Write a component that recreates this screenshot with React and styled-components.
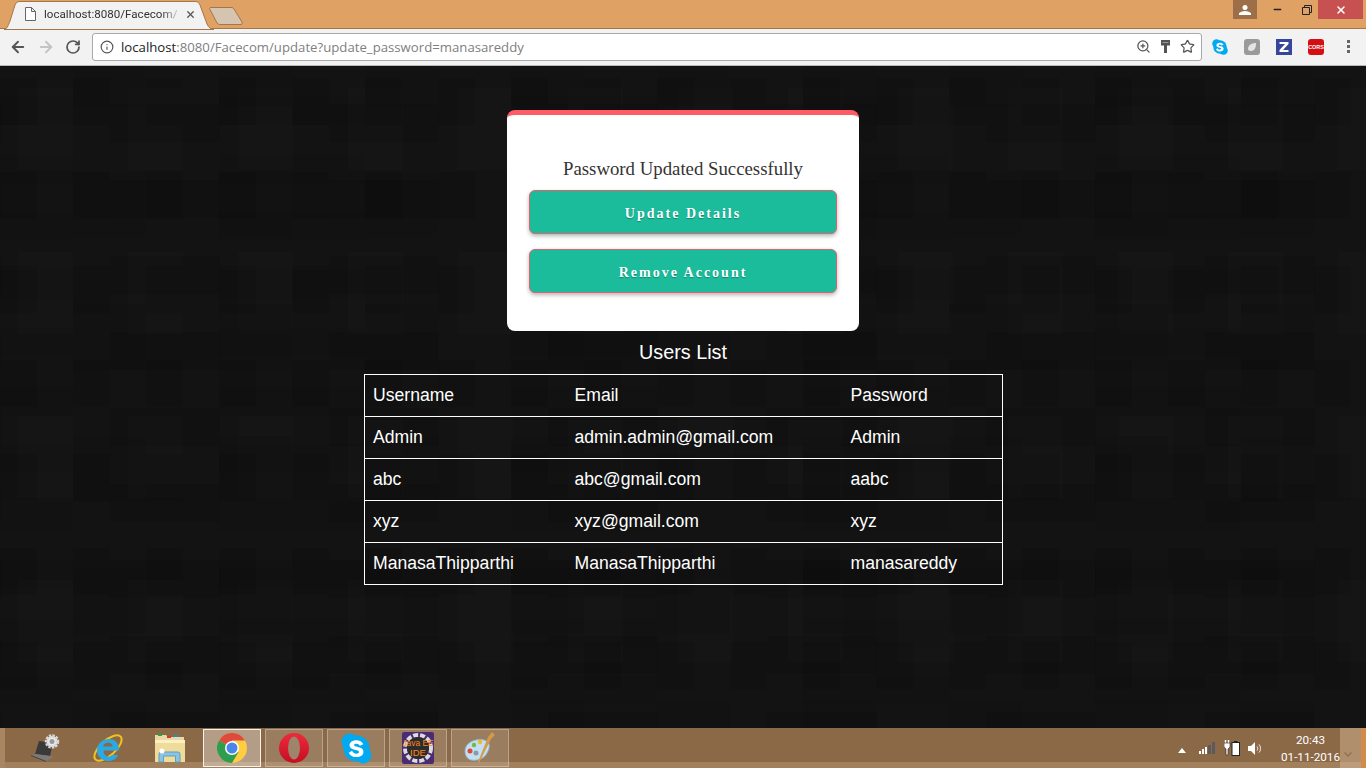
import React from "react";
import styled, { createGlobalStyle } from "styled-components";
import { ArrowLeft, ArrowRight, RotateCw, Info, ZoomIn, Star, X, Minus } from "lucide-react";

const GlobalStyle = createGlobalStyle`
  html, body {
    margin: 0;
    padding: 0;
    overflow: hidden;
  }
  * {
    box-sizing: border-box;
  }
`;

const Screen = styled.div`
  width: 1366px;
  height: 768px;
  display: flex;
  flex-direction: column;
  overflow: hidden;
  font-family: "Liberation Sans", Arial, sans-serif;
`;

/* browser chrome */
const TabStrip = styled.div`
  height: 29px;
  flex: none;
  background: #e0a164;
  border-bottom: 1px solid #a5764a;
  display: flex;
  align-items: flex-start;
  justify-content: space-between;
  padding-left: 4px;
`;

const TabGroup = styled.div`
  display: flex;
  align-items: flex-start;
`;

const Tab = styled.div`
  position: relative;
  width: 210px;
  height: 29px;
  margin-top: 1px;
  display: flex;
  align-items: center;
  padding: 0 0 3px 21px;
  font-family: Roboto, "Noto Sans", sans-serif;
  font-size: 11.6px;
  color: #333;
  white-space: nowrap;
`;

const TabShape = styled.svg`
  position: absolute;
  left: 0;
  top: 0;
`;

const TabText = styled.span`
  position: relative;
  width: 133px;
  margin-left: 8px;
  -webkit-mask-image: linear-gradient(90deg, #000 88%, rgba(0, 0, 0, 0.25));
  mask-image: linear-gradient(90deg, #000 88%, rgba(0, 0, 0, 0.25));
`;

const TabClose = styled.span`
  position: relative;
  margin-left: 8px;
  display: flex;
  color: #5a5a5a;
`;

const NewTab = styled.svg`
  margin: 7px 0 0 -5px;
`;

const WindowButtons = styled.div`
  display: flex;
  align-items: flex-start;
  padding-right: 3px;
`;

const ProfileButton = styled.div`
  width: 24px;
  height: 19px;
  background: #9c6f48;
  display: flex;
  align-items: center;
  justify-content: center;
  margin-right: 2px;
`;

const WindowButton = styled.div`
  width: ${(p) => p.$w}px;
  height: 19px;
  display: flex;
  align-items: center;
  justify-content: center;
  color: ${(p) => (p.$close ? "#fff" : "#222")};
  background: ${(p) => (p.$close ? "#c75050" : "transparent")};
`;

const Toolbar = styled.div`
  height: 37px;
  flex: none;
  background: #f2f2f2;
  border-bottom: 1px solid #b8b8b8;
  display: flex;
  align-items: center;
  padding: 0 0 1px 9px;
`;

const NavButton = styled.span`
  width: 28px;
  display: flex;
  color: ${(p) => (p.$off ? "#c4c4c4" : "#555")};
`;

const Omnibox = styled.div`
  width: 1110px;
  height: 28px;
  margin-left: -1px;
  background: #fff;
  border: 1px solid #a9a9a9;
  border-radius: 3px;
  display: flex;
  align-items: center;
  padding: 0 6px 0 7px;
  color: #555;
`;

const Url = styled.div`
  flex: 1;
  margin-left: 7px;
  font-family: "Open Sans", "Noto Sans", sans-serif;
  font-size: 13.2px;
  color: #808080;
  white-space: nowrap;
`;

const UrlHost = styled.span`
  color: #222;
`;

const OmniIcons = styled.div`
  display: flex;
  align-items: center;
  gap: 10px;
`;

const Extensions = styled.div`
  display: flex;
  align-items: center;
  gap: 16px;
  margin-left: 10px;
`;

const MenuDots = styled.svg`
  margin-left: 23px;
`;

/* page */
const Page = styled.main`
  flex: 1;
  min-height: 0;
  display: flex;
  flex-direction: column;
  align-items: center;
  padding-top: 44px;
  background-color: #131313;
  background-image:
    conic-gradient(rgba(0, 0, 0, 0.1) 25%, transparent 0),
    conic-gradient(from 90deg, rgba(0, 0, 0, 0.08) 25%, transparent 0),
    conic-gradient(from 180deg, rgba(0, 0, 0, 0.1) 25%, transparent 0),
    conic-gradient(from 270deg, rgba(255, 255, 255, 0.006) 25%, transparent 0),
    conic-gradient(rgba(0, 0, 0, 0.07) 25%, transparent 0);
  background-size: 73px 94px, 146px 132px, 219px 76px, 110px 164px, 292px 58px;
  background-position: 37px 12px, 0 40px, 110px 0, 18px 22px, 73px 30px;
`;

const Card = styled.section`
  width: 352px;
  height: 221px;
  background: #fff;
  border-top: 5px solid #ff5b67;
  border-radius: 8px;
  padding: 42px 22px 0;
  display: flex;
  flex-direction: column;
  align-items: center;
`;

const Message = styled.p`
  margin: 0 0 10px;
  height: 23px;
  line-height: 23px;
  font-family: "Liberation Serif", "Times New Roman", serif;
  font-size: 18.8px;
  color: #333;
`;

const ActionButton = styled.button`
  width: 308px;
  height: 44px;
  flex: none;
  margin-bottom: 15px;
  padding: 4px 0 0;
  background: #1abc9c;
  border: 1px solid #e0636c;
  border-radius: 6px;
  box-shadow: 0 2px 4px rgba(0, 0, 0, 0.3);
  color: #fff;
  font-family: "Liberation Serif", "Times New Roman", serif;
  font-size: 14px;
  font-weight: 700;
  letter-spacing: 2px;
  text-shadow: 0 1px 1px rgba(0, 0, 0, 0.3);
`;

const ListTitle = styled.h2`
  margin: 9px 0 10px;
  height: 24px;
  line-height: 24px;
  font-size: 19.8px;
  font-weight: 400;
  color: #fff;
`;

const UsersTable = styled.table`
  width: 638px;
  margin-left: 1px;
  border-collapse: collapse;
  table-layout: fixed;
  color: #fff;
  font-size: 17.6px;
  border: 1px solid #fff;
`;

const Cell = styled.td`
  height: 42px;
  padding: 0 8px;
  border-top: 1px solid #fff;
  white-space: nowrap;
`;

/* taskbar */
const Taskbar = styled.footer`
  height: 40px;
  flex: none;
  display: flex;
  align-items: stretch;
  background: linear-gradient(#8b6947 0 34px, #a2805c 34px);
  border-left: 5px solid #a98561;
  border-right: 5px solid #d18b4d;
`;

const TaskItems = styled.div`
  display: flex;
  gap: 4px;
  padding: 1px 0 0 12px;
`;

const TaskItem = styled.div`
  width: 58px;
  height: 38px;
  display: flex;
  align-items: center;
  justify-content: center;
  background: ${(p) =>
    p.$active ? "rgba(255,255,255,0.35)" : p.$open ? "rgba(255,255,255,0.13)" : "transparent"};
  border: 1px solid
    ${(p) => (p.$active ? "#f4f0ec" : p.$open ? "rgba(255,255,255,0.3)" : "transparent")};
`;

const Tray = styled.div`
  margin-left: auto;
  display: flex;
  align-items: center;
`;

const TrayIcons = styled.div`
  display: flex;
  align-items: center;
  gap: 8px;
`;

const Clock = styled.div`
  width: 59px;
  margin-left: 18px;
  padding-top: 2px;
  text-align: center;
  font-family: Roboto, "Noto Sans", sans-serif;
  font-size: 11.7px;
  line-height: 17px;
  color: #fff;
  white-space: nowrap;
`;

const ShowDesktop = styled.div`
  width: 21px;
  height: 40px;
  background: linear-gradient(#b08f6d 0 34px, #bd9c7a 34px);
  display: flex;
  align-items: flex-end;
  padding: 0 0 11px 4px;
`;

const users = [
  ["Admin", "admin.admin@gmail.com", "Admin"],
  ["abc", "abc@gmail.com", "aabc"],
  ["xyz", "xyz@gmail.com", "xyz"],
  ["ManasaThipparthi", "ManasaThipparthi", "manasareddy"],
];

function PageIcon() {
  return (
    <svg width="11" height="14" viewBox="0 0 11 14" style={{ position: "relative", flex: "none" }}>
      <path d="M.5 .5h6l4 4v9H.5z M6.500 .5v4h4" fill="#fff" stroke="#666" />
    </svg>
  );
}

function KeyIcon() {
  return (
    <svg width="9" height="13" viewBox="0 0 9 13">
      <path d="M0 0h9v5.500H6V13H3V5.500H0z" fill="#555" />
      <rect x="1.500" y="2" width="6" height="1" fill="#999" />
    </svg>
  );
}

function SkypeIcon({ size }) {
  return (
    <svg width={size} height={size} viewBox="0 0 32 32">
      <circle cx="9" cy="9" r="8.500" fill="#00a9f0" />
      <circle cx="23" cy="23" r="8.500" fill="#00a9f0" />
      <circle cx="16" cy="16" r="13.500" fill="#00a9f0" />
      <path
        d="M23 11.500c-1.200-2.500-3.800-4-7.200-4-4.200 0-7 2.200-7 5.200 0 6 9.800 3.800 9.800 6.800 0 1.100-1.200 1.800-2.900 1.800-2.100 0-3.300-1-4.300-2.900l-3.400 1.900c1.400 3 4.200 4.600 7.800 4.600 4.400 0 7.400-2.200 7.400-5.600 0-6-9.800-4-9.800-6.800 0-.9 1-1.500 2.500-1.500 1.700 0 2.700.7 3.600 2.200z"
        fill="#fff"
      />
    </svg>
  );
}

function ExtIcons() {
  return (
    <Extensions>
      <SkypeIcon size={16} />
      <svg width="16" height="16" viewBox="0 0 16 16">
        <rect width="16" height="16" rx="3" fill="#9a9a9a" />
        <path d="M4 10c0-4 4-6 8-6 0 4-1 8-5 8-2 0-3-1-3-2z" fill="#e4e4e4" />
      </svg>
      <svg width="16" height="16" viewBox="0 0 16 16">
        <rect width="16" height="16" fill="#35469c" />
        <path d="M3.500 3h9v2l-5.500 6h5.500v2h-9v-2l5.500-6H3.500z" fill="#fff" />
      </svg>
      <svg width="16" height="16" viewBox="0 0 16 16">
        <rect width="16" height="16" rx="3" fill="#d40f14" />
        <text x="8" y="10" textAnchor="middle" fontSize="5.400" fontWeight="700" fill="#fff" fontFamily="Liberation Sans">
          CORS
        </text>
      </svg>
    </Extensions>
  );
}

function LaptopIcon() {
  return (
    <svg width="32" height="30" viewBox="0 0 32 30">
      <path d="M5 21L9 8l14 2-3 13z" fill="#3a3a3a" />
      <path d="M1 22l4-1 15 2 4 1-8 4z" fill="#7a7a7a" />
      <path d="M1 22l15 6v1L1 23z" fill="#454545" />
      <circle cx="22" cy="8.500" r="5.500" fill="#ececec" stroke="#d6d6d6" strokeDasharray="2.200 1" strokeWidth="3.500" />
      <circle cx="22" cy="8.500" r="2.500" fill="#9a9a9a" />
    </svg>
  );
}

function IeIcon() {
  return (
    <svg width="32" height="31" viewBox="0 0 32 31">
      <ellipse cx="16" cy="15" rx="17" ry="7.500" transform="rotate(-42 16 15)" fill="none" stroke="#f2c31c" strokeWidth="2" />
      <path
        d="M8.500 17.500h18.500c.4-7-4-11.500-10-11.500S5 10.500 5 17s5 11 11.500 11c4.500 0 8-2.200 9.800-6h-6.300c-.9 1.100-2 1.600-3.500 1.600-2.500 0-4.700-1.900-5-6.100z M11 13.500c.5-2.300 2.500-3.700 5-3.700s4.400 1.400 4.800 3.700z"
        fill="#2aa9e4"
        fillRule="evenodd"
      />
    </svg>
  );
}

function FolderIcon() {
  return (
    <svg width="32" height="30" viewBox="0 0 32 30">
      <path d="M1 2h11l2 2h16v8H1z" fill="#e9d9a4" />
      <rect x="4" y="1" width="4" height="2" fill="#1fa83c" />
      <rect x="13" y="3" width="4" height="2" fill="#d43a2a" />
      <rect x="20" y="2" width="4" height="2" fill="#1f8fd4" />
      <path d="M1 7h30v22H1z" fill="#f0dc9a" />
      <path d="M1 7h30v3H1z" fill="#fbf0c4" />
      <path d="M5 29V21q0-2 2-2h17q2 0 2 2v8h-4.500v-6h-12v6z" fill="#8cc4e0" stroke="#5a9fc6" />
      <circle cx="8" cy="18" r="2.500" fill="#fff" />
    </svg>
  );
}

function ChromeIcon() {
  return (
    <svg width="30" height="30" viewBox="0 0 30 30">
      <circle cx="15" cy="15" r="15" fill="#ffcd40" />
      <path d="M15 15L2 7.500A15 15 0 0 1 28 7.500H15z" fill="#de4a3c" />
      <path d="M15 15L2 7.500A15 15 0 0 0 15 30l6.500-11z" fill="#2e9d4e" />
      <circle cx="15" cy="15" r="7" fill="#fff" />
      <circle cx="15" cy="15" r="5.500" fill="#4a86e8" />
    </svg>
  );
}

function OperaIcon() {
  return (
    <svg width="30" height="30" viewBox="0 0 30 30">
      <defs>
        <linearGradient id="operaRed" x1="0" y1="0" x2="0" y2="1">
          <stop offset="0" stopColor="#ee2a3c" />
          <stop offset="1" stopColor="#c40e22" />
        </linearGradient>
      </defs>
      <circle cx="15" cy="15" r="15" fill="url(#operaRed)" />
      <ellipse cx="15" cy="15" rx="6" ry="11.500" fill="#9d846a" />
    </svg>
  );
}

function JavaIcon() {
  return (
    <svg width="32" height="32" viewBox="0 0 32 32">
      <rect width="32" height="32" rx="2" fill="#4a2c72" />
      <circle cx="16" cy="16" r="13" fill="none" stroke="#dcdcdc" strokeWidth="4" strokeDasharray="5 2" />
      <circle cx="16" cy="16" r="11" fill="#2c2c2c" />
      <text x="16" y="14" textAnchor="middle" fontSize="8.400" fill="#ff8a1e" fontFamily="Liberation Sans">
        Java EE
      </text>
      <text x="16" y="23.500" textAnchor="middle" fontSize="9.500" fill="#ff8a1e" fontFamily="Liberation Sans">
        IDE
      </text>
    </svg>
  );
}

function PaintIcon() {
  return (
    <svg width="32" height="32" viewBox="0 0 32 32">
      <path d="M1 19C1 11 11 6 20 8c7 2 6 8 3 13-3 6-10 8-16 7-4-1-6-5-6-9z" fill="#c4dff0" stroke="#8fb8d4" />
      <circle cx="6" cy="19" r="2.500" fill="#e0453a" />
      <circle cx="10" cy="13" r="2.200" fill="#6cbd45" />
      <circle cx="16" cy="10" r="2.200" fill="#f0b830" />
      <circle cx="12" cy="21" r="2.500" fill="#8b9aa6" />
      <path d="M28 0l3 3-4 4L15 31l-1-1L24 5z" fill="#d49a4a" />
    </svg>
  );
}

function TrayIconSet() {
  return (
    <TrayIcons>
      <svg width="8" height="5" viewBox="0 0 8 5" style={{ marginTop: 4 }}>
        <path d="M4 0l4 5H0z" fill="#fff" />
      </svg>
      <svg width="16" height="12" viewBox="0 0 16 12" style={{ marginLeft: 5 }}>
        <rect x="0" y="9" width="2" height="3" fill="#fff" />
        <rect x="3" y="7" width="2" height="5" fill="#fff" />
        <rect x="6" y="5" width="2" height="7" fill="#fff" />
        <rect x="9" y="3" width="3" height="9" fill="#5b5b5b" />
        <rect x="13" y="0" width="3" height="12" fill="#5b5b5b" />
      </svg>
      <svg width="16" height="16" viewBox="0 0 16 16" style={{ marginLeft: 1 }}>
        <path d="M1.500 0v3M4.500 0v3" stroke="#fff" strokeWidth="1.500" fill="none" />
        <path d="M0 3h6v4L4 9v6H2V9L0 7z" fill="#fff" stroke="#222" strokeWidth=".6" />
        <rect x="8" y="2.500" width="7.500" height="13" fill="#fff" stroke="#222" />
        <rect x="10" y="1" width="3.500" height="2" fill="#222" />
      </svg>
      <svg width="15" height="13" viewBox="0 0 15 13">
        <path d="M0 4h3l4-4v13L3 9H0z" fill="#fff" />
        <path d="M9 4.500c1 1.300 1 2.700 0 4M11 2.500c2 2.500 2 5.500 0 8" stroke="#fff" fill="none" />
      </svg>
    </TrayIcons>
  );
}

export default function App() {
  return (
    <Screen>
      <GlobalStyle />
      <TabStrip>
        <TabGroup>
          <Tab>
            <TabShape width="210" height="29" viewBox="0 0 210 29">
              <path
                d="M0 28.500C3 28 4 25 6 20L11 4Q12 .5 15 .5H192Q195 .5 196 4L203 23Q205 28 210 28.500Z"
                fill="#f2f2f2"
                stroke="#a5764a"
              />
            </TabShape>
            <PageIcon />
            <TabText>localhost:8080/Facecom/</TabText>
            <TabClose>
              <X size={11} strokeWidth={3} />
            </TabClose>
          </Tab>
          <NewTab width="34" height="18" viewBox="0 0 34 18">
            <path
              d="M.5 1.500Q.5 .5 2 .5H23Q24 .5 25 2L33 15Q34 17.500 32 17.500H11Q9 17.500 8 16z"
              fill="#d4c4b0"
              stroke="#a5764a"
            />
          </NewTab>
        </TabGroup>
        <WindowButtons>
          <ProfileButton>
            <svg width="12" height="10" viewBox="0 0 12 10">
              <circle cx="6" cy="2.500" r="2.500" fill="#fff" />
              <path d="M0 10V8q3-2 6-2t6 2v2z" fill="#fff" />
            </svg>
          </ProfileButton>
          <WindowButton $w={36}>
            <Minus size={11} strokeWidth={3} />
          </WindowButton>
          <WindowButton $w={23}>
            <svg width="10" height="10" viewBox="0 0 10 10">
              <path d="M.5 2.500h7v7h-7z M2.500 2.500v-2h7v7h-2" fill="none" stroke="#222" />
            </svg>
          </WindowButton>
          <WindowButton $w={45} $close>
            <X size={12} strokeWidth={3} />
          </WindowButton>
        </WindowButtons>
      </TabStrip>

      <Toolbar>
        <NavButton>
          <ArrowLeft size={18} strokeWidth={2.5} />
        </NavButton>
        <NavButton $off>
          <ArrowRight size={18} strokeWidth={2.5} />
        </NavButton>
        <NavButton>
          <RotateCw size={16} strokeWidth={2.6} />
        </NavButton>
        <Omnibox>
          <Info size={14} strokeWidth={2} />
          <Url>
            <UrlHost>localhost</UrlHost>:8080/Facecom/update?update_password=manasareddy
          </Url>
          <OmniIcons>
            <ZoomIn size={15} />
            <KeyIcon />
            <Star size={15} strokeWidth={2} />
          </OmniIcons>
        </Omnibox>
        <ExtIcons />
        <MenuDots width="3" height="13" viewBox="0 0 3 13">
          <rect y="0" width="3" height="3" fill="#666" />
          <rect y="5" width="3" height="3" fill="#666" />
          <rect y="10" width="3" height="3" fill="#666" />
        </MenuDots>
      </Toolbar>

      <Page>
        <Card>
          <Message>Password Updated Successfully</Message>
          <ActionButton>Update Details</ActionButton>
          <ActionButton>Remove Account</ActionButton>
        </Card>
        <ListTitle>Users List</ListTitle>
        <UsersTable>
          <colgroup>
            <col width="202" />
            <col width="276" />
            <col width="160" />
          </colgroup>
          <tbody>
            <tr>
              <Cell>Username</Cell>
              <Cell>Email</Cell>
              <Cell>Password</Cell>
            </tr>
            {users.map((u) => (
              <tr key={u[0]}>
                <Cell>{u[0]}</Cell>
                <Cell>{u[1]}</Cell>
                <Cell>{u[2]}</Cell>
              </tr>
            ))}
          </tbody>
        </UsersTable>
      </Page>

      <Taskbar>
        <TaskItems>
          <TaskItem><LaptopIcon /></TaskItem>
          <TaskItem><IeIcon /></TaskItem>
          <TaskItem><FolderIcon /></TaskItem>
          <TaskItem $active><ChromeIcon /></TaskItem>
          <TaskItem $open><OperaIcon /></TaskItem>
          <TaskItem $open><SkypeIcon size={31} /></TaskItem>
          <TaskItem $open><JavaIcon /></TaskItem>
          <TaskItem $open><PaintIcon /></TaskItem>
        </TaskItems>
        <Tray>
          <TrayIconSet />
          <Clock>
            20:43
            <br />
            01-11-2016
          </Clock>
          <ShowDesktop>
            <svg width="8" height="5" viewBox="0 0 8 5">
              <path d="M.5 .5L4 4l3.500-3.500" fill="none" stroke="#8f7355" strokeWidth="1.500" />
            </svg>
          </ShowDesktop>
        </Tray>
      </Taskbar>
    </Screen>
  );
}
